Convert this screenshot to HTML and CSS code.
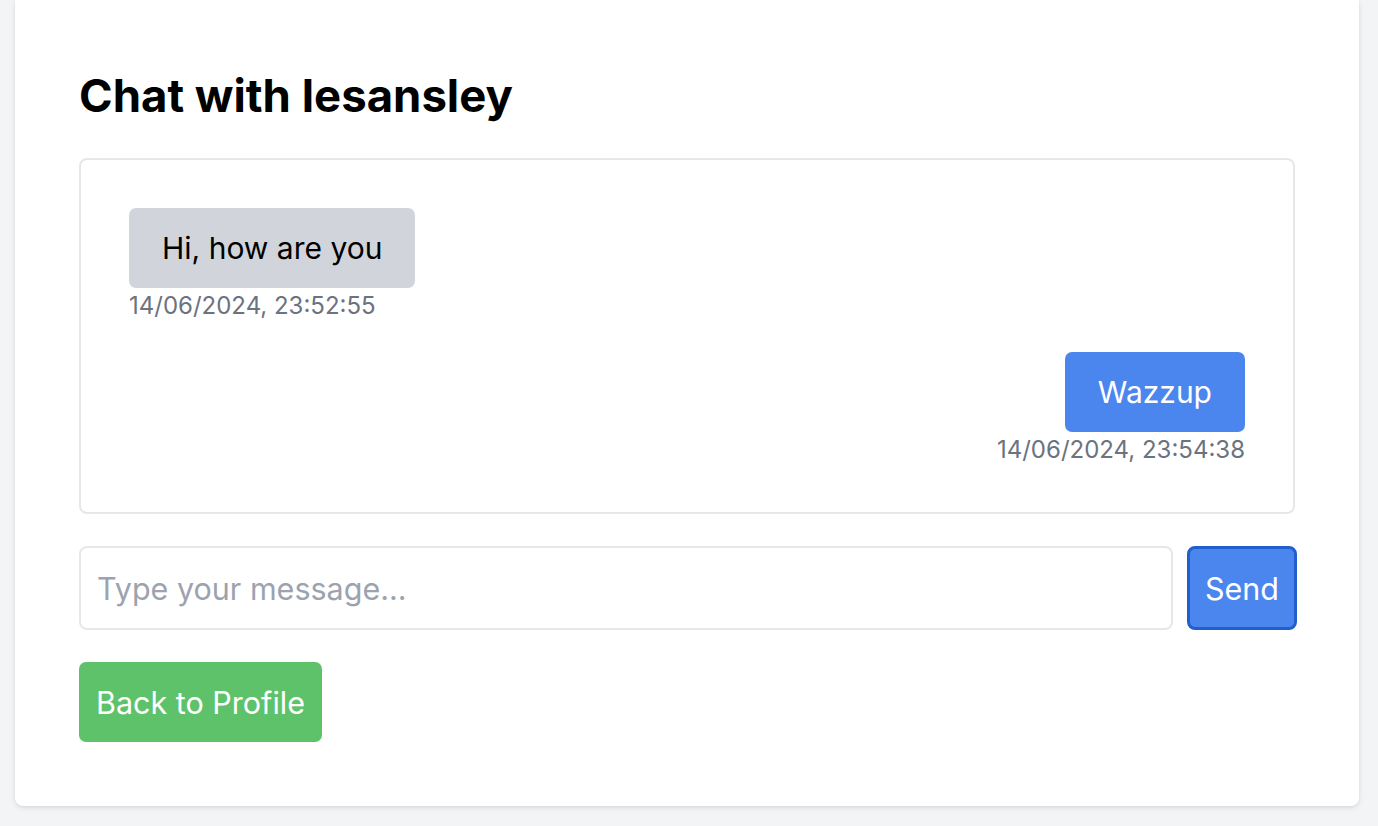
FILE: index.html
```html
<!DOCTYPE html>
<html lang="en">
<head>
<meta charset="utf-8">
<title>Chat with lesansley</title>
<link rel="stylesheet" href="styles.css">
</head>
<body>
<main class="card">
  <h1 class="title">Chat with lesansley</h1>
  <section class="chat-box">
    <div class="message incoming">
      <div class="bubble bubble-gray">Hi, how are you</div>
      <div class="time">14/06/2024, 23:52:55</div>
    </div>
    <div class="message outgoing">
      <div class="bubble bubble-blue">Wazzup</div>
      <div class="time">14/06/2024, 23:54:38</div>
    </div>
  </section>
  <form class="composer">
    <input class="composer-input" type="text" placeholder="Type your message...">
    <button class="send-btn" type="button">Send</button>
  </form>
  <button class="back-btn" type="button">Back to Profile</button>
</main>
</body>
</html>
```

FILE: styles.css
```css
* { box-sizing: border-box; }

html, body {
  margin: 0;
  padding: 0;
  background: #f3f4f6;
  font-family: Inter, "Liberation Sans", sans-serif;
  color: #000;
}

body {
  height: 826px;
  overflow: hidden;
}

.card {
  margin-left: 15px;
  width: 1344px;
  background: #fff;
  border-radius: 0 0 8px 8px;
  box-shadow: 0 2px 6px rgba(0, 0, 0, 0.08), 0 1px 3px rgba(0, 0, 0, 0.06);
  padding: 68px 64px 64px 64px;
}

.title {
  margin: 0 0 34px 0;
  font-size: 45.5px;
  line-height: 56px;
  font-weight: 700;
}

.chat-box {
  border: 2px solid #e5e7eb;
  border-radius: 8px;
  padding: 48px 48px 45px 48px;
  display: flex;
  flex-direction: column;
  gap: 29px;
}

.message {
  display: flex;
  flex-direction: column;
}

.message.incoming { align-items: flex-start; }
.message.outgoing { align-items: flex-end; }

.bubble {
  font-size: 30px;
  line-height: 42px;
  padding: 19px 33px;
  border-radius: 7px;
}

.bubble-gray {
  background: #d1d5db;
  color: #000;
}

.bubble-blue {
  background: #4b85ee;
  color: #fff;
}

.time {
  font-size: 24px;
  line-height: 35px;
  color: #6b7280;
}

.composer {
  margin: 32px -2px 0 0;
  display: flex;
  gap: 14px;
}

.composer-input {
  flex: 1;
  height: 84px;
  border: 2px solid #e5e7eb;
  border-radius: 8px;
  padding: 0 16px;
  font-family: inherit;
  font-size: 30.5px;
  color: #000;
  outline: none;
}

.composer-input::placeholder {
  color: #9ca3af;
}

.send-btn {
  width: 110px;
  height: 84px;
  border: 3px solid #2160cc;
  border-radius: 8px;
  background: #4b85ee;
  color: #fff;
  font-family: inherit;
  font-size: 30.5px;
  padding: 0;
}

.back-btn {
  margin-top: 32px;
  height: 80px;
  padding: 0 17px;
  border: none;
  border-radius: 7px;
  background: #5ec26a;
  color: #fff;
  font-family: inherit;
  font-size: 30.5px;
  display: block;
}
```
